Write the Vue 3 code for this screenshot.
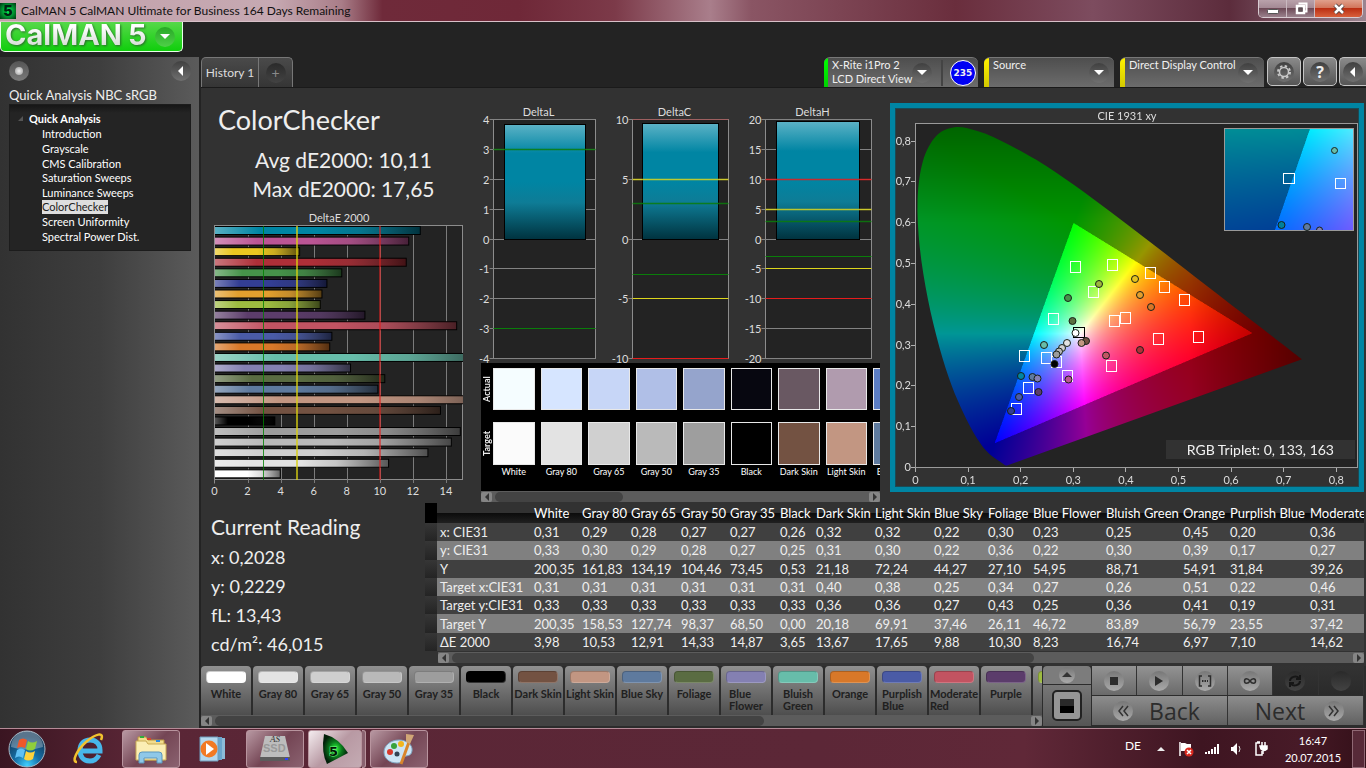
<script setup>
import { ref, onMounted } from 'vue'

const pages = ['Introduction', 'Grayscale', 'CMS Calibration', 'Saturation Sweeps', 'Luminance Sweeps', 'ColorChecker', 'Screen Uniformity', 'Spectral Power Dist.']

const patches = [
  ['White', '#ffffff'], ['Gray 80', '#e3e3e3'], ['Gray 65', '#cfcfcf'], ['Gray 50', '#b9b9b9'],
  ['Gray 35', '#9d9d9d'], ['Black', '#000000'], ['Dark Skin', '#735242'], ['Light Skin', '#c29682'],
  ['Blue Sky', '#5e7a9e'], ['Foliage', '#5a6c42'], ['Blue\nFlower', '#8480b2'], ['Bluish\nGreen', '#67bdaa'],
  ['Orange', '#d87829'], ['Purplish\nBlue', '#4a5ba6'], ['Moderate\nRed', '#c25361'], ['Purple', '#5b3c6b'], ['', '#9dbb40']
]

const strip = [
  ['White', '#f5fdff', '#fbfbfb'], ['Gray 80', '#d6e5ff', '#e3e3e3'], ['Gray 65', '#c7d6f7', '#d0d0d0'],
  ['Gray 50', '#b0bfe7', '#bababa'], ['Gray 35', '#95a4cc', '#9e9e9e'], ['Black', '#070710', '#000000'],
  ['Dark Skin', '#695862', '#735242'], ['Light Skin', '#b09bae', '#c29682'], ['Blue Sky', '#5b7dc4', '#5e7a9e']
]

const bars = [
  [12.45, '#0085a3'], [11.75, '#bb5594'], [5.15, '#eac720'], [11.6, '#ae2f38'], [7.7, '#46934a'], [6.8, '#333e94'],
  [6.5, '#e2a02e'], [6.4, '#9dbb40'], [9.1, '#5c3d6b'], [14.65, '#c25362'], [7.1, '#4a5ba6'], [6.97, '#d87829'],
  [16.74, '#67bdaa'], [8.23, '#8480b2'], [10.3, '#5a6c42'], [9.88, '#5e7a9e'], [17.65, '#c29682'], [13.67, '#735242'],
  [3.65, '#000000'], [14.87, '#9d9d9d'], [14.33, '#b9b9b9'], [12.91, '#cfcfcf'], [10.53, '#e3e3e3'], [3.98, '#ffffff']
]
const ex = v => 214.5 + v * 16.53

const G = '#0a7d0a', Y = '#dcd61c', R = '#e61c1c'
const deltas = [
  { name: 'DeltaL', x: 493.5, w: 102, max: 4, step: 1, bx: 504.5, bw: 81, top: 124.5, limits: [[3, G], [-3, G]] },
  { name: 'DeltaC', x: 632.5, w: 96, max: 10, step: 5, bx: 642.5, bw: 76, top: 123.5, limits: [[10, '#a35a5a'], [5, Y], [3, G], [-3, G], [-5, Y], [-10, R]] },
  { name: 'DeltaH', x: 765.5, w: 106, max: 20, step: 5, bx: 776.5, bw: 83, top: 121.5, limits: [[10, R], [5, Y], [3, G], [-3, G], [-5, Y], [-10, R]] }
]
const dy = (v, max) => Math.floor(239 - v * 119.5 / max) + 0.5
const ticks = d => Array.from({ length: 2 * d.max / d.step + 1 }, (_, i) => d.max - i * d.step)

const targets = [
  [1075, 267], [1112, 265], [1150, 273], [1164, 287], [1184, 300], [1093, 292], [1053, 319], [1125, 318], [1114, 321],
  [1158, 339], [1198, 337], [1111, 366], [1024, 356], [1046, 358], [1056, 362], [1067, 376], [1028, 388], [1016, 409]
]
const readings = [
  [1099, 284, '#9db53e'], [1135, 279, '#e6c31f'], [1140, 295, '#e39f2e'], [1151, 307, '#d87627'], [1068, 298, '#46934a'],
  [1072.5, 321, '#5a6f40'], [1086, 341, '#735242'], [1081.5, 343, '#c29682'], [1067, 343, '#e3e3e3'],
  [1062, 348, '#cfcfcf'], [1059, 351.5, '#b8b8b8'], [1056.5, 354.5, '#9c9c9c'], [1054.5, 364, '#000000'], [1044, 345, '#67bdaa'],
  [1140, 350, '#af3039'], [1106, 355.5, '#c25664'], [1021, 376, '#0085a3'], [1032.5, 377, '#5f7ba0'], [1037.5, 378.5, '#8480b4'],
  [1068.5, 379.5, '#bc5593'], [1038.5, 392, '#5c3d6b'], [1019, 397, '#4b5ca8'], [1011, 411, '#333e95'], [1075.5, 333, '#ffffff']
]

const cols = [12, 94, 48, 49, 50, 49, 50, 36, 59, 59, 54, 45, 73, 77, 47, 80, 90]
const heads = ['White', 'Gray 80', 'Gray 65', 'Gray 50', 'Gray 35', 'Black', 'Dark Skin', 'Light Skin', 'Blue Sky', 'Foliage', 'Blue Flower', 'Bluish Green', 'Orange', 'Purplish Blue', 'Moderate Red']
const rows = [
  ['x: CIE31', '0,31 0,29 0,28 0,27 0,27 0,26 0,32 0,32 0,22 0,30 0,23 0,25 0,45 0,20 0,36'],
  ['y: CIE31', '0,33 0,30 0,29 0,28 0,27 0,25 0,31 0,30 0,22 0,36 0,22 0,30 0,39 0,17 0,27'],
  ['Y', '200,35 161,83 134,19 104,46 73,45 0,53 21,18 72,24 44,27 27,10 54,95 88,71 54,91 31,84 39,26'],
  ['Target x:CIE31', '0,31 0,31 0,31 0,31 0,31 0,31 0,40 0,38 0,25 0,34 0,27 0,26 0,51 0,22 0,46'],
  ['Target y:CIE31', '0,33 0,33 0,33 0,33 0,33 0,33 0,36 0,36 0,27 0,43 0,25 0,36 0,41 0,19 0,31'],
  ['Target Y', '200,35 158,53 127,74 98,37 68,50 0,00 20,18 69,91 37,46 26,11 46,72 83,89 56,79 23,55 37,42'],
  ['ΔE 2000', '3,98 10,53 12,91 14,33 14,87 3,65 13,67 17,65 9,88 10,30 8,23 16,74 6,97 7,10 14,62']
].map(([label, v]) => ({ label, cells: v.split(' ') }))

const comma = i => (i ? '0,' + i : '0')

// Chromaticity diagram
const canvas = ref(null)
const locus = [
  [.1741, .005], [.1714, .0051], [.1689, .0069], [.1644, .0109], [.1566, .0177], [.144, .0297], [.1355, .0399], [.1241, .0578],
  [.1096, .0868], [.0913, .1327], [.0687, .2007], [.0454, .295], [.0235, .4127], [.0082, .5384], [.0039, .6548], [.0139, .7502],
  [.0389, .812], [.0743, .8338], [.1142, .8262], [.1547, .8059], [.2296, .7543], [.3016, .6923], [.3731, .6245], [.4441, .5547],
  [.5125, .4866], [.5752, .4242], [.627, .3725], [.6658, .334], [.6915, .3083], [.719, .2809], [.7347, .2653]
]
function chroma(x, y) {
  const Yv = Math.max(y, 0.001)
  const X = x / Yv, Z = (1 - x - y) / Yv
  const c = [3.2406 * X - 1.5372 - 0.4986 * Z, -0.9689 * X + 1.8758 + 0.0415 * Z, 0.0557 * X - 0.204 + 1.057 * Z]
  const inside = Math.min(...c) >= 0
  const m = Math.max(...c)
  let f = inside ? 255 : 150
  if (x > 0.52) f *= 1 - 2 * (x - 0.52)
  if (y > 0.6) f *= 1 - 1.4 * (y - 0.6)
  return c.map(v => f * Math.max(v, 0) / m)
}
function field(w, h, x0, x1, y0, y1) {
  const off = document.createElement('canvas')
  off.width = w * 2
  off.height = h * 2
  const g = off.getContext('2d')
  const img = g.createImageData(off.width, off.height)
  for (let j = 0; j < off.height; j++) {
    for (let i = 0; i < off.width; i++) {
      const c = chroma(x0 + (x1 - x0) * i / off.width, y1 - (y1 - y0) * j / off.height)
      const k = (j * off.width + i) * 4
      img.data[k] = c[0]
      img.data[k + 1] = c[1]
      img.data[k + 2] = c[2]
      img.data[k + 3] = 255
    }
  }
  g.putImageData(img, 0, 0)
  return off
}
onMounted(() => {
  const g = canvas.value.getContext('2d')
  g.fillStyle = '#232323'
  g.fillRect(20, 15, 443, 345)
  const P = ([x, y]) => [20.5 + x * 526, 359.5 - y * 408]
  const pts = locus.map(P)
  g.save()
  g.beginPath()
  g.moveTo(...pts[0])
  for (let i = 0; i < pts.length - 1; i++) {
    const a = pts[Math.max(i - 1, 0)], b = pts[i], c = pts[i + 1], d = pts[Math.min(i + 2, pts.length - 1)]
    g.bezierCurveTo(b[0] + (c[0] - a[0]) / 6, b[1] + (c[1] - a[1]) / 6, c[0] - (d[0] - b[0]) / 6, c[1] - (d[1] - b[1]) / 6, c[0], c[1])
  }
  g.closePath()
  g.clip()
  g.drawImage(field(442, 344, 0, 442 / 526, 0, 344 / 408), 20.5, 15.5, 442, 344)
  g.restore()
  g.drawImage(field(130, 103, 0.1547, 0.2569, 0.219, 0.32), 329, 20, 130, 103)
})
</script>

<template>
  <div class="screen">
    <header class="titlebar">
      <span class="appicon">5</span>
      <span class="title">CalMAN 5 CalMAN Ultimate for Business 164 Days Remaining</span>
      <div class="winbtns">
        <button aria-label="Minimize"><svg width="14" height="14"><rect x="1.500" y="7.500" width="11" height="4" rx="1" fill="#fff" stroke="#555" /></svg></button>
        <button aria-label="Restore"><svg width="14" height="14" fill="none"><path d="M4.500 1.500h8v8h-2.500" stroke="#fff" stroke-width="2" /><rect x="3" y="4" width="7" height="7" stroke="#fff" stroke-width="2.500" /><rect x="5" y="6" width="3" height="3" stroke="#555" /></svg></button>
        <button class="close" aria-label="Close"><svg width="14" height="14"><path d="M3 3l8 8M11 3l-8 8" stroke="#544" stroke-width="4.500" /><path d="M3 3l8 8M11 3l-8 8" stroke="#fff" stroke-width="2.500" /></svg></button>
      </div>
    </header>

    <div class="brandrow">
      <button class="brand">
        <span class="brandname">CalMAN</span><span class="brandname five">5</span>
        <span class="knob green"><svg width="10" height="6"><path d="M0 0h10l-5 5z" fill="#fff" /></svg></span>
      </button>
    </div>

    <div class="body">
      <aside class="sidebar">
        <div class="sidetop">
          <button class="knob rec" aria-label="Record"><i></i></button>
          <button class="knob" aria-label="Collapse"><svg width="8" height="10"><path d="M6 0v10l-5-5z" fill="#fff" /></svg></button>
        </div>
        <h2>Quick Analysis NBC sRGB</h2>
        <nav class="tree">
          <div class="root"><svg width="6" height="6"><path d="M5 0v5h-5z" fill="#555" /></svg><a href="#">Quick Analysis</a></div>
          <ul>
            <li v-for="p in pages" :key="p"><a href="#" :class="{ on: p === 'ColorChecker' }">{{ p }}</a></li>
          </ul>
        </nav>
      </aside>

      <main class="main">
        <div class="tabbar">
          <button class="tab">History 1</button>
          <button class="tab plus"><span class="knob dim">+</span></button>
          <span class="spring"></span>
          <div class="device meter">
            <i class="flag go"></i><p>X-Rite i1Pro 2<br>LCD Direct View</p>
            <button class="knob" aria-label="Meter menu"><svg width="10" height="6"><path d="M0 0h10l-5 5z" fill="#fff" /></svg></button>
            <span class="split"></span><b class="level">235</b>
          </div>
          <div class="device source">
            <i class="flag"></i><p>Source</p>
            <button class="knob" aria-label="Source menu"><svg width="10" height="6"><path d="M0 0h10l-5 5z" fill="#fff" /></svg></button>
          </div>
          <div class="device display">
            <i class="flag"></i><p>Direct Display Control</p>
            <button class="knob" aria-label="Display menu"><svg width="10" height="6"><path d="M0 0h10l-5 5z" fill="#fff" /></svg></button>
          </div>
          <button class="square" aria-label="Settings"><span class="knob"><svg width="16" height="16" viewBox="-8 -8 16 16" fill="none" stroke="#c8c8c8"><circle r="4.500" stroke-width="1.500" /><circle r="6" stroke-width="2" stroke-dasharray="2.400 2.310" /></svg></span></button>
          <button class="square" aria-label="Help"><span class="knob q">?</span></button>
          <button class="square last" aria-label="Expand"><span class="knob"><svg width="8" height="10"><path d="M6 0v10l-5-5z" fill="#fff" /></svg></span></button>
        </div>

        <div class="work">
          <section class="summary">
            <h1>ColorChecker</h1>
            <p class="stat">Avg dE2000: 10,11</p>
            <p class="stat">Max dE2000: 17,65</p>
            <svg class="chart" viewBox="201 210 278 290">
              <defs>
                <linearGradient id="barShade">
                  <stop offset="0" stop-color="#fff" stop-opacity=".35" /><stop offset=".22" stop-color="#fff" stop-opacity="0" />
                  <stop offset=".5" stop-color="#000" stop-opacity="0" /><stop offset=".7" stop-color="#222" stop-opacity=".15" /><stop offset="1" stop-color="#000" stop-opacity=".62" />
                </linearGradient>
                <clipPath id="ePlot"><rect x="214" y="225" width="249" height="255" /></clipPath>
              </defs>
              <text x="339" y="222" text-anchor="middle">DeltaE 2000</text>
              <rect x="214.500" y="225.500" width="248" height="254" fill="#232323" stroke="#8c8c8c" />
              <path v-for="i in 7" :key="i" :d="`M${Math.round(ex(i * 2)) + .5} 226V483`" stroke="#7b7b7b" />
              <g clip-path="url(#ePlot)">
                <g v-for="(b, i) in bars" :key="i">
                  <rect x="214.500" :y="226.500 + i * 10.58" :width="b[0] * 16.53" height="8" :fill="b[1]" />
                  <rect x="214.500" :y="226.500 + i * 10.58" :width="b[0] * 16.53" height="8" fill="url(#barShade)" stroke="#000" />
                </g>
              </g>
              <path d="M263.500 226v254" stroke="#008000" stroke-opacity=".8" />
              <path d="M297 226v254" stroke="#d8d010" stroke-opacity=".7" stroke-width="2" />
              <path d="M380 226v254" stroke="#e02020" stroke-opacity=".75" stroke-width="1.500" />
              <path d="M214.500 225.500v258" stroke="#8c8c8c" />
              <text v-for="i in 8" :key="'t' + i" :x="ex(i * 2 - 2)" y="495" text-anchor="middle">{{ i * 2 - 2 }}</text>
            </svg>
          </section>

          <section class="middle">
            <svg class="chart" viewBox="481 103 399 260">
              <defs>
                <linearGradient id="column" x2="0" y2="1">
                  <stop offset="0" stop-color="#5cb2c6" /><stop offset=".25" stop-color="#0085a3" /><stop offset=".5" stop-color="#0085a3" />
                  <stop offset=".68" stop-color="#0e7c96" /><stop offset="1" stop-color="#00323e" />
                </linearGradient>
              </defs>
              <g v-for="d in deltas" :key="d.name">
                <text :x="d.x + d.w / 2 - 6" y="116" text-anchor="middle">{{ d.name }}</text>
                <rect :x="d.x" y="119.500" :width="d.w" height="239" fill="#232323" stroke="#8c8c8c" />
                <g v-for="t in ticks(d)" :key="t">
                  <path :d="`M${d.x - 4} ${dy(t, d.max)}h${d.w + 4}`" stroke="#828282" />
                  <text :x="d.x - 4" :y="dy(t, d.max) + 4" text-anchor="end">{{ t }}</text>
                </g>
                <rect :x="d.bx" :y="d.top" :width="d.bw" :height="239.500 - d.top" fill="url(#column)" stroke="#000" />
                <path v-for="l in d.limits" :key="l[0]" :d="`M${d.x} ${dy(l[0], d.max)}h${d.w}`" :stroke="l[1]" :stroke-opacity="l[0] > 0 ? .85 : 1" :stroke-width="l[0] > 0 && l[0] < d.max ? 1.5 : 1" />
              </g>
            </svg>
            <div class="strip">
              <div class="sides"><span>Actual</span><span>Target</span></div>
              <div class="window">
                <div class="reel">
                  <div v-for="s in strip" :key="s[0]" class="frame">
                    <i :style="{ background: s[1] }"></i><i class="low" :style="{ background: s[2] }"></i><span>{{ s[0] }}</span>
                  </div>
                </div>
              </div>
            </div>
            <div class="scroll"><button aria-label="Left"><svg width="6" height="8"><path d="M5 0v8l-4-4z" /></svg></button><i class="thumb t1"></i><button aria-label="Right"><svg width="6" height="8"><path d="M1 0v8l4-4z" /></svg></button></div>
          </section>

          <section class="cie">
            <canvas ref="canvas" width="464" height="379"></canvas>
            <svg class="chart" viewBox="895 108 464 379">
              <text x="1127" y="120" text-anchor="middle">CIE 1931 xy</text>
              <rect x="915.500" y="123.500" width="442" height="344" fill="none" stroke="#9a9a9a" />
              <g v-for="i in 9" :key="i">
                <path :d="`M911 ${467.500 - Math.round((i - 1) * 40.8)}h4M${915.500 + Math.round((i - 1) * 52.6)} 468v4`" stroke="#b0b0b0" />
                <text x="911" :y="471 - (i - 1) * 40.8" text-anchor="end">{{ comma(i - 1) }}</text>
                <text :x="915.500 + (i - 1) * 52.6" y="484" text-anchor="middle">{{ comma(i - 1) }}</text>
              </g>
              <g fill="none" stroke="#fff">
                <rect v-for="(t, i) in targets" :key="i" :x="t[0] - 4.500" :y="t[1] - 5.500" width="10" height="11" />
                <rect x="1073.500" y="327.500" width="11" height="10" stroke="#000" />
              </g>
              <circle v-for="(c, i) in readings" :key="i" :cx="c[0]" :cy="c[1]" r="3.500" :fill="c[2]" stroke="#182018" />
              <rect x="1224.500" y="128.500" width="129" height="102" fill="none" stroke="#9a9a9a" />
              <g fill="none" stroke="#fff"><rect x="1283.500" y="173.500" width="11" height="10" /><rect x="1335.500" y="178.500" width="10" height="10" /></g>
              <g stroke="#182018"><circle cx="1334.500" cy="150.500" r="3" fill="#67bdaa" /><circle cx="1281.500" cy="225" r="3.500" fill="#00809a" /><circle cx="1307" cy="227" r="3.500" fill="#5f7ba0" /><path d="M1316.500 230a3 3 0 0 1 6 0" fill="#8480b4" /></g>
              <rect x="1166" y="440" width="189" height="19" fill="#323232" />
              <text class="triplet" x="1334" y="455" text-anchor="end">RGB Triplet: 0, 133, 163</text>
            </svg>
          </section>
        </div>

        <div class="lower">
          <section class="reading">
            <h3>Current Reading</h3>
            <p>x: 0,2028</p><p>y: 0,2229</p><p>fL: 13,43</p><p>cd/m²: 46,015</p>
          </section>
          <section class="data">
            <div class="tablebox">
              <table>
                <colgroup><col v-for="(c, i) in cols" :key="i" :style="{ width: c + 'px' }"></colgroup>
                <thead><tr><th class="stub"></th><th></th><th v-for="h in heads" :key="h">{{ h }}</th></tr></thead>
                <tbody>
                  <tr v-for="r in rows" :key="r.label"><td class="stub"></td><th scope="row">{{ r.label }}</th><td v-for="(c, i) in r.cells" :key="i">{{ c }}</td></tr>
                </tbody>
              </table>
            </div>
            <div class="scroll wide"><button aria-label="Left"><svg width="6" height="8"><path d="M5 0v8l-4-4z" /></svg></button><i class="thumb t2"></i><button aria-label="Right"><svg width="6" height="8"><path d="M1 0v8l4-4z" /></svg></button></div>
          </section>
        </div>

        <footer class="deck">
          <div class="picker">
            <div class="chips">
              <button v-for="p in patches" :key="p[0]" class="chip"><i :style="{ background: p[1] }"></i><span>{{ p[0] }}</span></button>
            </div>
            <div class="scroll"><button aria-label="Left"><svg width="6" height="8"><path d="M5 0v8l-4-4z" /></svg></button><i class="thumb t3"></i><button aria-label="Right"><svg width="6" height="8"><path d="M1 0v8l4-4z" /></svg></button></div>
          </div>
          <div class="pattern">
            <button class="up" aria-label="Expand"><span class="knob light"><svg width="10" height="6"><path d="M0 5h10l-5-5z" fill="#333" /></svg></span></button>
            <button class="window-btn" aria-label="Pattern window"><i></i></button>
          </div>
          <div class="controls">
            <button aria-label="Stop"><span class="knob light"><svg width="10" height="10"><path d="M1 1h8v8h-8z" fill="#2c2c2c" /></svg></span></button>
            <button aria-label="Play"><span class="knob light"><svg width="10" height="12"><path d="M1 1v10l8-5z" fill="#2c2c2c" /></svg></span></button>
            <button aria-label="Series"><span class="knob light"><svg width="14" height="12" fill="none" stroke="#2c2c2c" stroke-width="1.500"><path d="M4 1h-2.500v10h2.500M10 1h2.500v10h-2.500" /><path d="M4 6h6" stroke-dasharray="1.500 1" stroke-width="2" /></svg></span></button>
            <button aria-label="Continuous"><span class="knob light"><svg width="14" height="8" fill="none" stroke="#2c2c2c" stroke-width="1.500"><path d="M7 4c-2-3-5.500-3-5.500 0s3.500 3 5.500 0s5.500-3 5.500 0s-3.500 3-5.500 0z" /></svg></span></button>
            <button class="off" aria-label="Refresh"><span class="knob dim"><svg width="14" height="14" fill="none" stroke="#161616" stroke-width="2"><path d="M2 7c0-4 6-6 9-3M12 7c0 4-6 6-9 3" /><path d="M12 1v4h-4M2 13v-4h4" /></svg></span></button>
            <button class="off" aria-label="Idle"><span class="knob dim"></span></button>
            <button class="nav"><span class="knob light"><svg width="12" height="12" fill="none" stroke="#333" stroke-width="1.500"><path d="M6 1l-4 5l4 5M11 1l-4 5l4 5" /></svg></span>Back</button>
            <button class="nav next">Next<span class="knob light"><svg width="12" height="12" fill="none" stroke="#333" stroke-width="1.500"><path d="M1 1l4 5l-4 5M6 1l4 5l-4 5" /></svg></span></button>
          </div>
        </footer>
      </main>
    </div>

    <footer class="taskbar">
      <button class="task start" aria-label="Start">
        <svg width="38" height="38" viewBox="0 0 38 38">
          <defs><radialGradient id="orb" cx=".5" cy=".95" r=".8"><stop offset="0" stop-color="#3fd0ff" /><stop offset=".45" stop-color="#1670a8" /><stop offset="1" stop-color="#123a5c" /></radialGradient></defs>
          <circle cx="19" cy="19" r="18" fill="url(#orb)" stroke="#a9b8c4" /><path d="M3 17a16 16 0 0 1 32 0q-16 5-32 0z" fill="#fff" opacity=".3" />
          <path d="M11 10q4-3 8 0l-2 8q-4-2-8 0z" fill="#f0582a" /><path d="M20 11q4 3 9 0l-2 8q-5 3-9 0z" fill="#8fce3c" />
          <path d="M9 20q4-3 8 0l-2 8q-4-3-8 0z" fill="#5fc0f5" /><path d="M18 21q4 3 9 0l-2 8q-5 3-9 0z" fill="#ffd23c" />
        </svg>
      </button>
      <button class="task ie" aria-label="Internet Explorer">
        <svg width="34" height="34" viewBox="0 0 34 34" fill="none">
          <path d="M27 23c-2 4-5 6-9 6c-6 0-10-4-10-10.500s4-10.500 10-10.500s10 4 10 10v1h-19" stroke="#47b6ea" stroke-width="5" />
          <path d="M5 30c-6 0 0-12 9-20s19-11 15-2" stroke="#f2c22e" stroke-width="2.500" />
        </svg>
      </button>
      <button class="task open" aria-label="Explorer">
        <svg width="34" height="32" viewBox="0 0 34 32">
          <path d="M4 4h8l2 3h16v20h-26z" fill="#f2dc8c" stroke="#b8963e" /><path d="M2 8h10l2 3h18v16h-30z" fill="#fbeeb4" stroke="#c9ab55" />
          <path d="M6 3h4v2h-4z" fill="#2fae3c" /><path d="M13 5h4v2h-4z" fill="#d8432c" /><path d="M22 7h4v2h-4z" fill="#2b8ae0" />
          <path d="M5 30v-8q0-3 3-3h17q3 0 3 3v8h-5v-5h-13v5z" fill="#8fc8e8" stroke="#5a96bd" />
        </svg>
      </button>
      <button class="task" aria-label="Media Player">
        <svg width="30" height="28" viewBox="0 0 30 28"><path d="M8 3h19v21h-19z" fill="#8cbbd8" /><path d="M5 2h19v23h-19z" fill="#6aa5cc" /><path d="M2 2h18v24h-18z" fill="#b4d8ee" stroke="#6f9dbc" /><circle cx="11" cy="14" r="8.500" fill="#f27a24" /><path d="M8 8v12l8-6z" fill="#fff" /></svg>
      </button>
      <button class="task open ssd" aria-label="AS SSD">
        <svg width="34" height="32" viewBox="0 0 34 32"><path d="M7 3h20l5 22h-30z" fill="#bdbdbd" /><path d="M2 24h30v4h-30z" fill="#5c5c5c" /><path d="M27 25h3v2h-3z" fill="#3040ff" /><text x="12" y="9" class="as">AS</text><text x="5" y="19" class="ss">SSD</text></svg>
      </button>
      <button class="task open active" aria-label="CalMAN">
        <svg width="32" height="34" viewBox="0 0 32 34">
          <defs><radialGradient id="leaf"><stop offset="0" stop-color="#2aff3c" /><stop offset=".5" stop-color="#0b7a1c" /><stop offset="1" stop-color="#02200a" /></radialGradient></defs>
          <path d="M5 2q15 4 24 19l-21 11q-6-12-3-30z" fill="url(#leaf)" /><text x="10" y="24" class="leaf5">5</text>
        </svg>
      </button>
      <i class="stack"></i>
      <button class="task open" aria-label="Paint">
        <svg width="34" height="34" viewBox="0 0 34 34"><path d="M17 8c8 0 14 5 13 11s-6 4-8 6s1 6-7 6s-13-5-13-11s6-12 15-12z" fill="#cde5f5" stroke="#7fa6c2" /><circle cx="8" cy="20" r="3" fill="#d8392c" /><circle cx="12" cy="14" r="3" fill="#3aa23c" /><circle cx="19" cy="12" r="3" fill="#f2b51d" /><circle cx="15" cy="22" r="2.500" fill="#345" /><path d="M27 10l-8 22" stroke="#d9862c" stroke-width="3" /><path d="M24 2l8 1l-4 9l-4-2z" fill="#d1a676" /></svg>
      </button>
      <span class="spring"></span>
      <div class="tray">
        <span class="lang">DE</span>
        <svg width="8" height="5"><path d="M0 5h8l-4-4z" fill="#eee" /></svg>
        <svg class="flagicon" width="16" height="16"><path d="M2 1v14" stroke="#fff" stroke-width="1.500" /><path d="M3 2h4l2 1h4v7h-10z" fill="#fff" /><circle cx="11" cy="11" r="4.500" fill="#d9281e" /><path d="M9 9l4 4M13 9l-4 4" stroke="#fff" stroke-width="1.500" /></svg>
        <svg width="16" height="12" fill="#fff"><path d="M1 9h2v2h-2zM4 8h2v3h-2zM7 6h2v5h-2zM10 4h2v7h-2zM13 1h2v10h-2z" /></svg>
        <svg class="speaker" width="14" height="14"><path d="M1 5h2l4-4v12l-4-4h-2z" fill="#fff" /><path d="M9 4q2 3 0 6" stroke="#ddd" fill="none" /></svg>
        <svg width="14" height="15" fill="none" stroke="#fff" stroke-width="1.500"><path d="M6 2h-4v12h6v-4M3 1h3" /><path d="M6 5h7v3q-3 3-6 0zM8 1v4M11 1v4M9 9v4" fill="#fff" /></svg>
        <p class="clock">16:47<br>20.07.2015</p>
        <button class="peek" aria-label="Show desktop"></button>
      </div>
    </footer>
  </div>
</template>

<style scoped>
* { box-sizing: border-box; margin: 0; padding: 0; }
.screen { min-height: 100vh; display: flex; flex-direction: column; background: #232323; color: #eee; font: 12px/15px Lato, "Open Sans", sans-serif; overflow: hidden; }
button { border: 0; background: none; color: inherit; font: inherit; }
a { color: inherit; text-decoration: none; }
svg { display: block; flex-shrink: 0; }
.spring { flex: 1; }
.titlebar { height: 22px; display: flex; align-items: center; gap: 5px; border-bottom: 1px solid #d8c0c8; background: linear-gradient(90deg, #c2a0aa 0, #c6a9b2 20%, #a97d88 25%, #6f2a3a 28%, #6f2838 38%, #7c3a49 45%, #a97e8b 52%, #8a5564 55%, #6a2e3d 70%, #7d4c5f 80%, #5c2c3c 90%, #9a8490 100%); color: #111; flex-shrink: 0; }
.appicon { width: 16px; height: 16px; background: radial-gradient(#0f5, #031); color: #021; font: 900 14px/16px Inter, sans-serif; text-align: center; }
.title { flex: 1; white-space: nowrap; }
.winbtns { display: flex; align-self: flex-start; margin-right: 3px; border: 1px solid #d8ccd2; border-top: 0; border-radius: 0 0 5px 5px; height: 18px; overflow: hidden; }
.winbtns button { width: 28px; display: grid; place-items: center; background: linear-gradient(#b9a2ab 0, #a48a95 45%, #6e4b58 50%, #9a818c 100%); border-right: 1px solid #c9b9c0; }
.winbtns .close { width: 47px; border: 0; background: linear-gradient(#e0a08c 0, #d2765c 45%, #bb2f13 50%, #d8603c 100%); }
.brandrow { height: 35px; flex-shrink: 0; }
.brand { width: 183px; height: 30px; display: flex; align-items: center; padding: 0 7px 4px 4px; background: linear-gradient(#57d84a, #0fce0c); border: 1px solid #e8ffe8; border-top: 0; border-radius: 0 0 5px 5px; }
.brandname { font: 700 29px/28px Inter, sans-serif; background: linear-gradient(#fff 20%, #cfd8cf); -webkit-background-clip: text; background-clip: text; color: transparent; filter: drop-shadow(1px 1px 1px #2b6b2b); }
.five { flex: 1; text-align: left; margin-left: 6px; }
.knob { width: 20px; height: 20px; border-radius: 50%; display: grid; place-items: center; background: linear-gradient(#404040, #707070); flex-shrink: 0; }
.knob.green { background: linear-gradient(#28a826, #4ed048); margin-top: 4px; }
.knob.light { background: linear-gradient(#777, #aaa); }
.knob.dim { background: linear-gradient(#2a2a2a, #434343); color: #8a8a8a; font-size: 14px; }
.body { flex: 1; display: flex; min-height: 0; }
.sidebar { width: 199px; flex-shrink: 0; padding: 4px 8px 0 9px; background: linear-gradient(90deg, #323232, #3e3e3e 50%, #5b5b5b); }
.sidetop { display: flex; justify-content: space-between; }
.rec i { width: 8px; height: 8px; border-radius: 50%; background: radial-gradient(#eee, #999); }
.rec { background: linear-gradient(#555, #7a7a7a); }
h2 { font-weight: 400; font-size: 12px; line-height: 17px; margin-top: 6px; white-space: nowrap; font-size: 13px; }
.tree { height: 147px; padding-top: 6px; background: linear-gradient(#161616, #242424 8px); border: 1px solid #1c1c1c; font-size: 11px; color: #fff; }
.root { display: flex; align-items: center; gap: 5px; padding-left: 8px; font-weight: 700; line-height: 16px; }
.tree ul { list-style: none; display: grid; grid-template-rows: repeat(8, 1fr); height: 117px; padding-left: 32px; line-height: 14px; }
.tree li { display: flex; align-items: center; }
.tree .on { background: #dedede; color: #222; }
.main { flex: 1; min-width: 0; display: flex; flex-direction: column; margin-left: 2px; }
.tabbar { height: 31px; display: flex; align-items: flex-start; border-bottom: 1px solid #1a1a1a; }
.tab { height: 30px; width: 58px; border: 1px solid #777; border-bottom: 0; border-radius: 5px 0 0 0; background: linear-gradient(#4a4a4a, #353535); color: #ddd; white-space: nowrap; }
.plus { width: 34px; border-left: 0; border-radius: 0 5px 0 0; display: grid; place-items: center; }
.device { position: relative; height: 30px; display: flex; align-items: center; background: linear-gradient(#4e4e4e, #6c6c6c); border-top: 1px solid #777; border-radius: 6px 6px 0 0; margin-right: 6px; overflow: hidden; color: #f0f0f0; }
.device p { flex: 1; align-self: flex-start; line-height: 14px; font-size: 11px; white-space: nowrap; }
.flag { width: 5px; height: 30px; background: linear-gradient(#fff200, #d2c800); margin-right: 4px; }
.flag.go { background: linear-gradient(#00ff00, #00d000); }
.meter { width: 154px; }
.source { width: 130px; padding-right: 5px; }
.display { width: 144px; padding-right: 6px; margin-right: 3px; }
.split { width: 2px; height: 26px; background: #444; margin: 0 7px 0 9px; }
.level { width: 26px; height: 26px; margin-right: 2px; border-radius: 50%; border: 1px solid #fff; background: #0000f4; font: 700 9px/24px "DejaVu Sans", sans-serif; text-align: center; flex-shrink: 0; }
.square { width: 34px; height: 29px; display: grid; place-items: center; border: 1px solid #c4c4c4; border-radius: 5px; background: linear-gradient(#8a8a8a, #555); margin-right: 2px; flex-shrink: 0; }
.square.last { width: 27px; margin-right: 0; border-right: 0; border-radius: 5px 0 0 5px; }
.q { font: 700 16px/20px "Open Sans", sans-serif; }
.work { display: grid; grid-template-columns: 280fr 409fr 474fr; background: #323232; height: 415px; padding: 15px 2px 0 0; align-items: start; }
.summary, .middle { min-width: 0; }
.chart { width: 100%; height: auto; overflow: visible; }
.chart text { fill: #ddd; font-size: 11px; }
.chart .triplet { font-size: 14px; fill: #f2f2f2; }
h1 { font-weight: 400; font-size: 27px; line-height: 34px; padding-left: 17px; margin-bottom: 8px; }
.stat { font-size: 21px; line-height: 29px; text-align: center; padding-left: 5px; }
.summary .chart { margin-top: 7px; padding-right: 2px; }
.middle { padding-right: 10px; }
.strip { height: 128px; background: #000; display: flex; overflow: hidden; }
.sides { width: 12px; display: flex; flex-direction: column; padding-top: 5px; gap: 12px; }
.sides span { height: 42px; writing-mode: vertical-rl; transform: rotate(180deg); text-align: center; font-size: 9px; line-height: 12px; font-weight: 700; }
.window { flex: 1; min-width: 0; overflow: hidden; padding-top: 5px; }
.reel { display: flex; width: 380px; }
.frame { flex: 0 0 12.5%; padding-right: 6px; }
.frame i { display: block; height: 42px; border: 1px solid #e8e8e8; }
.frame .low { margin-top: 12px; height: 43px; }
.frame span { display: block; margin: 0 -4px; text-align: center; white-space: nowrap; font-size: 9px; line-height: 13px; color: #fff; }
.scroll { height: 11px; display: flex; align-items: center; justify-content: space-between; background: #5c5c5c; }
.scroll button { width: 11px; height: 10px; background: #858585; border-radius: 2px; display: grid; place-items: center; }
.scroll svg { fill: #333; }
.thumb { height: 10px; border-radius: 5px; background: #434343; margin-right: auto; margin-left: 3px; }
.t1 { width: 128px; } .t2 { width: 582px; } .t3 { width: 549px; }
.cie { position: relative; border: 5px solid #0085a3; outline: 1px solid #1a4a55; outline-offset: -6px; }
.cie canvas { position: absolute; inset: 0; width: 100%; height: 100%; }
.cie .chart { position: relative; }
.lower { flex: 1; display: flex; background: #323232; padding-right: 2px; min-height: 0; }
.reading { width: 224px; flex-shrink: 0; padding: 8px 0 0 10px; font-size: 18px; line-height: 29px; }
h3 { font-weight: 400; font-size: 21px; line-height: 32px; }
.data { flex: 1; min-width: 0; }
.tablebox { overflow: hidden; }
table { table-layout: fixed; border-collapse: collapse; width: 972px; height: 148px; font-size: 13px; line-height: 16px; }
th, td { text-align: left; font-weight: 400; white-space: nowrap; padding: 0 0 0 3px; overflow: visible; }
thead tr { height: 20px; background: linear-gradient(#323232 50%, #0c0c0c 52%, #202020); color: #fff; }
thead .stub { background: #000; }
tbody tr { background: #404040; }
tbody tr:nth-child(even) { background: #808080; }
tbody .stub { background: linear-gradient(#363636, #242424); }
.wide { margin: 1px 0 0 13px; }
.deck { display: flex; height: 62px; padding: 0 2px 2px 0; background: #2c2c2c; }
.picker { flex: 1; min-width: 0; }
.chips { height: 49px; display: flex; gap: 2px; overflow: hidden; }
.chip { flex: 0 0 50px; display: flex; flex-direction: column; align-items: center; padding-top: 5px; border-radius: 4px 4px 0 0; background: linear-gradient(#909090, #4e4e4e); color: #202020; font-weight: 700; font-size: 11px; line-height: 12px; }
.chip i { width: 40px; height: 12px; border-radius: 4px; border: 1px solid #0003; border-right-color: #fff3; border-bottom-color: #fff3; flex-shrink: 0; }
.chip span { margin: 5px -4px 0; text-align: left; white-space: pre; }
.pattern { width: 48px; margin: 0 1px; display: flex; flex-direction: column; gap: 1px; }
.up { height: 18px; display: grid; place-items: center; background: #7c7c7c; border-radius: 4px 4px 0 0; }
.up .knob { width: 16px; height: 16px; }
.window-btn { flex: 1; display: grid; place-items: center; background: linear-gradient(#777, #555); }
.window-btn i { width: 30px; height: 31px; border: 2px solid #222; border-radius: 5px; background: linear-gradient(#2a2a2a 50%, #000 50%) center / 14px 14px no-repeat, #969696; }
.controls { width: 272px; display: grid; grid-template-columns: repeat(12, 1fr); grid-template-rows: 29px 29px; gap: 1px 0; }
.controls button { grid-column: span 2; display: flex; align-items: center; justify-content: center; background: linear-gradient(#939393, #6a6a6a); border-right: 1px solid #333; }
.controls .off { background: linear-gradient(#333, #2a2a2a); }
.controls .nav { grid-column: span 6; gap: 16px; font: 23px/28px "Open Sans", sans-serif; font-weight: 500; color: #2c2c2c; background: linear-gradient(#8d8d8d, #616161); padding-right: 6px; }
.controls .next { gap: 19px; padding: 0 0 0 8px; }
.taskbar { height: 40px; display: flex; align-items: center; flex-shrink: 0; background: linear-gradient(90deg, #3a1521 0, #5a2636 10%, #5c2737 60%, #602838 75%, #3e1521 88%, #471a27 95%, #341019); border-top: 1px solid #b58b97; overflow: hidden; }
.task { width: 58px; height: 38px; display: grid; place-items: center; margin-right: 4px; flex-shrink: 0; }
.start { width: 54px; margin-right: 6px; }
.open { border: 1px solid #b8949e; border-radius: 3px; background: linear-gradient(135deg, #b898a2, #744554 50%, #8b6270); }
.active { width: 54px; margin-right: 0; background: linear-gradient(135deg, #f4ecef, #b899a3 50%, #c4abb3); }
.stack { width: 4px; height: 38px; margin-right: 4px; border: 1px solid #b8949e; border-left: 0; border-radius: 0 3px 3px 0; background: #8b6270; }
.as { font: italic 9px "Liberation Serif", serif; fill: #333; }
.ss { font: 700 11px "Liberation Sans", sans-serif; fill: #999; }
.leaf5 { font: 700 13px "DejaVu Sans", sans-serif; fill: #001a04; stroke: #7f8; stroke-width: 1; paint-order: stroke; }
.tray { display: flex; align-items: center; height: 100%; color: #fff; gap: 10px; }
.lang { margin: 0 6px 6px 0; }
.tray .flagicon { margin-left: 3px; }
.clock { width: 70px; text-align: center; line-height: 17px; font-size: 11px; padding-top: 1px; }
.peek { width: 13px; height: 38px; border: 1px solid #8f6874; background: #572a38; margin: 0 1px 0 -6px; }
</style>

<style>
html, body { background: #232323; }
</style>
